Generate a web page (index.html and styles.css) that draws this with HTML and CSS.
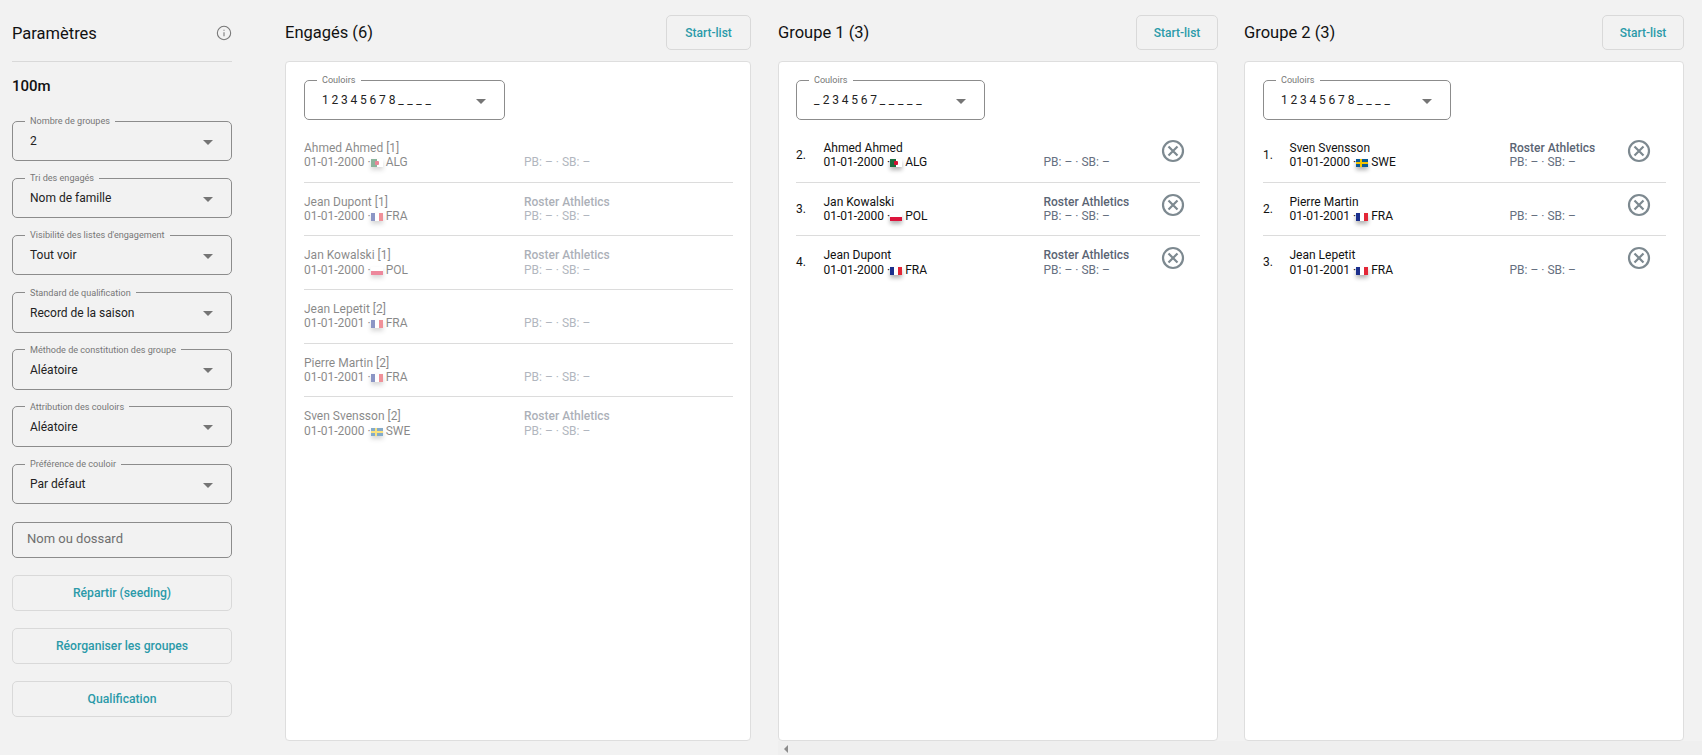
FILE: index.html
```html
<!DOCTYPE html>
<html>
<head>
    <meta charset="utf-8">
    <link rel="stylesheet" href="styles.css">
</head>
<body>
    <div class="page">
        <aside class="sidebar">
            <div class="sidebar-head">
                <h2>Paramètres</h2>
                <svg class="info-icon" viewBox="0 0 24 24"><circle cx="12" cy="12" r="10"/><path d="M12 11v6M12 7v1.6"/></svg>
            </div>
            <div class="event-name">100m</div>

            <fieldset class="field"><legend>Nombre de groupes</legend><span>2</span><i class="caret"></i></fieldset>
            <fieldset class="field"><legend>Tri des engagés</legend><span>Nom de famille</span><i class="caret"></i></fieldset>
            <fieldset class="field"><legend>Visibilité des listes d'engagement</legend><span>Tout voir</span><i class="caret"></i></fieldset>
            <fieldset class="field"><legend>Standard de qualification</legend><span>Record de la saison</span><i class="caret"></i></fieldset>
            <fieldset class="field"><legend>Méthode de constitution des groupe</legend><span>Aléatoire</span><i class="caret"></i></fieldset>
            <fieldset class="field"><legend>Attribution des couloirs</legend><span>Aléatoire</span><i class="caret"></i></fieldset>
            <fieldset class="field"><legend>Préférence de couloir</legend><span>Par défaut</span><i class="caret"></i></fieldset>

            <div class="search">Nom ou dossard</div>
            <button class="btn btn-wide">Répartir (seeding)</button>
            <button class="btn btn-wide">Réorganiser les groupes</button>
            <button class="btn btn-wide">Qualification</button>
        </aside>

        <section class="column col-entries">
            <div class="col-head">
                <h2>Engagés (6)</h2>
                <button class="btn btn-start">Start-list</button>
            </div>
            <div class="panel dimmed">
                <fieldset class="field lanes"><legend>Couloirs</legend><span>1 2 3 4 5 6 7 8 <em>_ _ _ _</em></span><i class="caret"></i></fieldset>
                <div class="row">
                    <div class="who"><div>Ahmed Ahmed [1]</div><div class="sub">01-01-2000 ·<i class="flag flag-alg"></i> ALG</div></div>
                    <div class="club"><b></b><div>PB: – · SB: –</div></div>
                </div>
                <div class="row">
                    <div class="who"><div>Jean Dupont [1]</div><div class="sub">01-01-2000 ·<i class="flag flag-fra"></i> FRA</div></div>
                    <div class="club"><b>Roster Athletics</b><div>PB: – · SB: –</div></div>
                </div>
                <div class="row">
                    <div class="who"><div>Jan Kowalski [1]</div><div class="sub">01-01-2000 ·<i class="flag flag-pol"></i> POL</div></div>
                    <div class="club"><b>Roster Athletics</b><div>PB: – · SB: –</div></div>
                </div>
                <div class="row">
                    <div class="who"><div>Jean Lepetit [2]</div><div class="sub">01-01-2001 ·<i class="flag flag-fra"></i> FRA</div></div>
                    <div class="club"><b></b><div>PB: – · SB: –</div></div>
                </div>
                <div class="row">
                    <div class="who"><div>Pierre Martin [2]</div><div class="sub">01-01-2001 ·<i class="flag flag-fra"></i> FRA</div></div>
                    <div class="club"><b></b><div>PB: – · SB: –</div></div>
                </div>
                <div class="row">
                    <div class="who"><div>Sven Svensson [2]</div><div class="sub">01-01-2000 ·<i class="flag flag-swe"></i> SWE</div></div>
                    <div class="club"><b>Roster Athletics</b><div>PB: – · SB: –</div></div>
                </div>
            </div>
        </section>

        <section class="column col-group group-one">
            <div class="col-head">
                <h2>Groupe 1 (3)</h2>
                <button class="btn btn-start">Start-list</button>
            </div>
            <div class="panel">
                <fieldset class="field lanes"><legend>Couloirs</legend><span><em>_</em> 2 3 4 5 6 7 <em>_ _ _ _ _</em></span><i class="caret"></i></fieldset>
                <div class="row">
                    <div class="num">2.</div>
                    <div class="who"><div>Ahmed Ahmed</div><div class="sub">01-01-2000 ·<i class="flag flag-alg"></i> ALG</div></div>
                    <div class="club"><b></b><div>PB: – · SB: –</div></div>
                    <svg class="remove" viewBox="0 0 24 24"><circle cx="12" cy="12" r="10"/><path d="M7.5 7.5l9 9M16.5 7.5l-9 9"/></svg>
                </div>
                <div class="row">
                    <div class="num">3.</div>
                    <div class="who"><div>Jan Kowalski</div><div class="sub">01-01-2000 ·<i class="flag flag-pol"></i> POL</div></div>
                    <div class="club"><b>Roster Athletics</b><div>PB: – · SB: –</div></div>
                    <svg class="remove" viewBox="0 0 24 24"><circle cx="12" cy="12" r="10"/><path d="M7.5 7.5l9 9M16.5 7.5l-9 9"/></svg>
                </div>
                <div class="row">
                    <div class="num">4.</div>
                    <div class="who"><div>Jean Dupont</div><div class="sub">01-01-2000 ·<i class="flag flag-fra"></i> FRA</div></div>
                    <div class="club"><b>Roster Athletics</b><div>PB: – · SB: –</div></div>
                    <svg class="remove" viewBox="0 0 24 24"><circle cx="12" cy="12" r="10"/><path d="M7.5 7.5l9 9M16.5 7.5l-9 9"/></svg>
                </div>
            </div>
        </section>

        <section class="column col-group">
            <div class="col-head">
                <h2>Groupe 2 (3)</h2>
                <button class="btn btn-start">Start-list</button>
            </div>
            <div class="panel">
                <fieldset class="field lanes"><legend>Couloirs</legend><span>1 2 3 4 5 6 7 8 <em>_ _ _ _</em></span><i class="caret"></i></fieldset>
                <div class="row">
                    <div class="num">1.</div>
                    <div class="who"><div>Sven Svensson</div><div class="sub">01-01-2000 ·<i class="flag flag-swe"></i> SWE</div></div>
                    <div class="club"><b>Roster Athletics</b><div>PB: – · SB: –</div></div>
                    <svg class="remove" viewBox="0 0 24 24"><circle cx="12" cy="12" r="10"/><path d="M7.5 7.5l9 9M16.5 7.5l-9 9"/></svg>
                </div>
                <div class="row">
                    <div class="num">2.</div>
                    <div class="who"><div>Pierre Martin</div><div class="sub">01-01-2001 ·<i class="flag flag-fra"></i> FRA</div></div>
                    <div class="club"><b></b><div>PB: – · SB: –</div></div>
                    <svg class="remove" viewBox="0 0 24 24"><circle cx="12" cy="12" r="10"/><path d="M7.5 7.5l9 9M16.5 7.5l-9 9"/></svg>
                </div>
                <div class="row">
                    <div class="num">3.</div>
                    <div class="who"><div>Jean Lepetit</div><div class="sub">01-01-2001 ·<i class="flag flag-fra"></i> FRA</div></div>
                    <div class="club"><b></b><div>PB: – · SB: –</div></div>
                    <svg class="remove" viewBox="0 0 24 24"><circle cx="12" cy="12" r="10"/><path d="M7.5 7.5l9 9M16.5 7.5l-9 9"/></svg>
                </div>
            </div>
        </section>
    </div>
    <div class="scroll-strip"><i class="scroll-arrow"></i></div>
</body>
</html>
```

FILE: styles.css
```css
html, body {
    margin: 0;
    height: 755px;
    overflow: hidden;
}
body {
    background: #f2f2f2;
    color: #111;
    font-family: Roboto, sans-serif;
    font-size: 12px;
    line-height: 14px;
}
h2 {
    margin: 0;
    font-size: 16.5px;
    font-weight: 400;
    line-height: 22px;
}
.page {
    display: flex;
    height: 741px;
    padding: 15px 18px 0 12px;
    box-sizing: border-box;
}

/* left column */
.sidebar {
    width: 220px;
    margin-right: 53px;
    flex: none;
}
.sidebar-head {
    display: flex;
    justify-content: space-between;
    align-items: center;
    height: 36px;
    padding-bottom: 10px;
    border-bottom: 1px solid #d9d9d9;
}
.sidebar-head h2 {
    margin-top: 1px;
}
.info-icon {
    width: 16px;
    height: 16px;
    fill: none;
    stroke: #777;
    stroke-width: 1.6;
}
.event-name {
    margin: 15px 0 21px;
    font-size: 15px;
    font-weight: 500;
    line-height: 18px;
}
.field {
    position: relative;
    display: flex;
    align-items: center;
    height: 45px;
    margin: 0 0 12.2px;
    padding: 0 0 0 17px;
    box-sizing: border-box;
    border: 1px solid #8c8c8c;
    border-radius: 5px;
    min-width: 0;
}
.field legend {
    margin-left: -5px;
    padding: 0 5px;
    color: #777;
    font-size: 9.1px;
    line-height: 10px;
    white-space: nowrap;
}
.field span {
    margin-bottom: 4px;
    color: #222;
}
.caret {
    position: absolute;
    right: 18px;
    top: 13.5px;
    border-left: 5.5px solid transparent;
    border-right: 5.5px solid transparent;
    border-top: 5px solid #757575;
}
.search {
    display: flex;
    align-items: center;
    height: 36px;
    margin-top: 17.4px;
    padding: 0 0 2px 14px;
    box-sizing: border-box;
    border: 1px solid #8c8c8c;
    border-radius: 5px;
    color: #6f6f6f;
    font-size: 13px;
}
.btn {
    padding: 0;
    background: transparent;
    border: 1px solid #d9d9d9;
    border-radius: 5px;
    color: #2b9aa9;
    font-family: Roboto, sans-serif;
    font-size: 12.2px;
    font-weight: 500;
}
.btn-wide {
    display: block;
    width: 100%;
    height: 35.5px;
    margin-top: 17.5px;
}
.btn-start {
    width: 82px;
    height: 35px;
    font-size: 12px;
}

/* list columns */
.column {
    display: flex;
    flex-direction: column;
    flex: none;
}
.col-entries {
    width: 466px;
    margin-right: 27px;
}
.col-group {
    width: 440px;
    margin-right: 26px;
}
.col-group:last-child {
    margin-right: 0;
}
.col-entries .btn-start {
    width: 85px;
}
.col-head {
    display: flex;
    justify-content: space-between;
    align-items: flex-start;
    height: 46px;
}
.col-head h2 {
    margin-top: 7px;
}
.panel {
    flex: 1;
    padding: 13px 17px 0 18px;
    background: #fff;
    border: 1px solid #dedede;
    border-radius: 4px;
}
.group-one .panel {
    padding-left: 17px;
}
.field.lanes {
    width: 188px;
    margin-bottom: 9px;
}
.group-one .field.lanes {
    width: 189px;
}
.col-entries .field.lanes {
    width: 201px;
}
.lanes span {
    letter-spacing: -0.1px;
    white-space: nowrap;
}
.lanes em {
    font-style: normal;
    letter-spacing: 0.35px;
}
.row {
    display: flex;
    height: 53.7px;
    box-sizing: border-box;
    padding-top: 12px;
    border-bottom: 1px solid #dcdcdc;
    position: relative;
    line-height: 14.4px;
}
.row:last-child {
    border-bottom: none;
}
.num {
    width: 26.5px;
    padding-top: 7px;
    flex: none;
}
.group-one .num {
    width: 27.5px;
}
.who {
    width: 220px;
    flex: none;
}
.club {
    color: #667080;
}
.club b {
    display: block;
    min-height: 14.4px;
    color: #5a6473;
    font-weight: 500;
}
.sub {
    white-space: nowrap;
}
.flag {
    display: inline-block;
    width: 12px;
    height: 8px;
    margin: 0 0 -1px 0;
    box-shadow: 0 3px 4px rgba(0, 0, 0, 0.3);
}
.flag-alg {
    background:
        radial-gradient(circle at 50% 50%, #d21034 2px, transparent 2.5px),
        linear-gradient(90deg, #1b6b3e 50%, #fff 50%);
}
.flag-fra {
    background: linear-gradient(90deg, #1c2f8c 33%, #fff 33%, #fff 66%, #e32636 66%);
}
.flag-pol {
    background: linear-gradient(180deg, #fff 50%, #dc143c 50%);
}
.flag-swe {
    background:
        linear-gradient(90deg, transparent 30%, #f5c400 30%, #f5c400 50%, transparent 50%),
        linear-gradient(180deg, #0b5a96 38%, #f5c400 38%, #f5c400 62%, #0b5a96 62%);
}
.remove {
    position: absolute;
    right: 15px;
    top: 10px;
    width: 24px;
    height: 24px;
    fill: none;
    stroke: #7d8990;
    stroke-width: 2.2;
}
.dimmed .who,
.dimmed .club {
    opacity: 0.5;
}

.scroll-strip {
    height: 14px;
    margin-left: 778px;
    background: #efefef;
    position: relative;
}
.scroll-arrow {
    position: absolute;
    left: 6px;
    top: 4px;
    border-top: 4px solid transparent;
    border-bottom: 4px solid transparent;
    border-right: 4px solid #8c8c8c;
}
```
